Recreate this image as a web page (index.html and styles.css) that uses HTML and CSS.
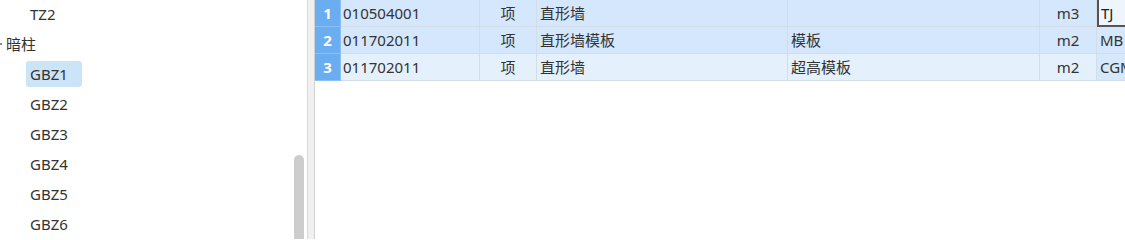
FILE: index.html
```html
<!DOCTYPE html>
<html lang="zh-CN">
<head>
<meta charset="utf-8">
<link rel="stylesheet" href="styles.css">
</head>
<body>
<div class="app">
  <div class="tree">
    <ul class="tree-list">
      <li class="node leaf"><span class="label">TZ2</span></li>
      <li class="node group"><span class="caret"></span><span class="label">暗柱</span></li>
      <li class="node leaf"><span class="label selected">GBZ1</span></li>
      <li class="node leaf"><span class="label">GBZ2</span></li>
      <li class="node leaf"><span class="label">GBZ3</span></li>
      <li class="node leaf"><span class="label">GBZ4</span></li>
      <li class="node leaf"><span class="label">GBZ5</span></li>
      <li class="node leaf"><span class="label">GBZ6</span></li>
    </ul>
    <div class="vscroll"><div class="thumb"></div></div>
  </div>
  <div class="splitter"></div>
  <div class="grid-wrap">
    <div class="grid">
      <div class="row r-a">
        <div class="cell num">1</div>
        <div class="cell code">010504001</div>
        <div class="cell center">项</div>
        <div class="cell">直形墙</div>
        <div class="cell"></div>
        <div class="cell center">m3</div>
        <div class="cell editing">TJ</div>
      </div>
      <div class="row r-a">
        <div class="cell num">2</div>
        <div class="cell code">011702011</div>
        <div class="cell center">项</div>
        <div class="cell">直形墙模板</div>
        <div class="cell">模板</div>
        <div class="cell center">m2</div>
        <div class="cell">MB</div>
      </div>
      <div class="row r-b">
        <div class="cell num">3</div>
        <div class="cell code">011702011</div>
        <div class="cell center">项</div>
        <div class="cell">直形墙</div>
        <div class="cell">超高模板</div>
        <div class="cell center">m2</div>
        <div class="cell last-b">CGM</div>
      </div>
    </div>
  </div>
</div>
</body>
</html>
```
FILE: styles.css
```css
* { box-sizing: border-box; }
html, body {
  margin: 0;
  padding: 0;
  width: 1125px;
  height: 239px;
  overflow: hidden;
  background: #ffffff;
}
body {
  font-family: "Noto Sans", "Noto Sans CJK SC", sans-serif;
  font-size: 15px;
  color: #333333;
}
.app {
  display: flex;
  height: 239px;
  overflow: hidden;
}
.tree {
  width: 307px;
  height: 239px;
  display: flex;
  background: #ffffff;
  overflow: hidden;
}
.tree-list {
  list-style: none;
  margin: -1px 0 0 0;
  padding: 0;
  flex: 1;
}
.node {
  height: 30px;
  display: flex;
  align-items: center;
  position: relative;
}
.node.leaf { padding-left: 26px; }
.node.group { padding-left: 2px; }
.label {
  display: inline-flex;
  align-items: center;
  height: 26px;
  padding: 0 4px;
  line-height: 26px;
  border-radius: 3px;
}
.selected {
  background: #cce4f8;
  width: 56px;
}
.caret {
  position: absolute;
  left: -4px;
  top: 14px;
  width: 6px;
  height: 2px;
  background: #8a8a8a;
}
.vscroll {
  width: 16px;
  padding-left: 3px;
  padding-top: 155px;
}
.thumb {
  width: 10px;
  height: 84px;
  background: #cdcdcd;
  border-radius: 5px 5px 0 0;
}
.splitter {
  width: 8px;
  background: #f0f0f0;
  border-left: 1px solid #d9d9d9;
  border-right: 1px solid #d2d2d2;
}
.grid-wrap {
  flex: 1;
  overflow: hidden;
  background: #ffffff;
}
.grid {
  width: 870px;
}
.row {
  display: grid;
  grid-template-columns: 26px 139px 57px 251px 252px 57px 88px;
  height: 27px;
}
.cell {
  border-right: 1px solid #d3dde8;
  border-bottom: 1px solid #d3dde8;
  padding-left: 3px;
  line-height: 26px;
  white-space: nowrap;
  overflow: hidden;
}
.cell.code { padding-left: 2px; }
.r-a .cell { background: #d4e7fc; }
.r-b .cell { background: #e4f1fd; }
.row .cell.num {
  background: #6aadf1;
  color: #ffffff;
  font-weight: bold;
  text-align: center;
  padding-left: 0;
  border-right: 1px solid #8cc0f4;
  border-bottom: 1px solid #8cc0f4;
}
.cell.center {
  text-align: center;
  padding-left: 0;
}
.row .cell.editing {
  background: #eef5fd;
  border: 2px solid #555555;
  border-top: none;
  padding-left: 2px;
  color: #222222;
}
.row .cell.last-b { background: #d6e8fb; }
```
